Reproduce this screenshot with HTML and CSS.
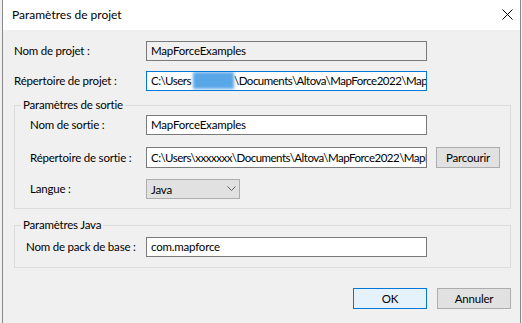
FILE: index.html
```html
<!DOCTYPE html>
<html lang="fr">
<head>
<meta charset="utf-8">
<title>Paramètres de projet</title>
<link rel="stylesheet" href="styles.css">
</head>
<body>
<div class="window">
  <div class="titlebar">
    <span class="title">Paramètres de projet</span>
    <svg class="close" width="11" height="11" viewBox="0 0 11 11"><path d="M0.5 0.5L10.5 10.5M10.5 0.5L0.5 10.5" stroke="#000" stroke-width="1" fill="none"/></svg>
  </div>
  <div class="content">
    <div class="row">
      <span class="label label-top">Nom de projet :</span>
      <div class="field readonly">MapForceExamples</div>
    </div>
    <div class="row row-gap">
      <span class="label label-top">Répertoire de projet :</span>
      <div class="field focused path">C:\Users<span class="redact"></span>\Documents\Altova\MapForce2022\MapForceExamples</div>
    </div>

    <div class="group group-out">
      <div class="legend">Paramètres de sortie</div>
      <div class="row">
        <span class="label label-g1">Nom de sortie :</span>
        <div class="field">MapForceExamples</div>
      </div>
      <div class="row row-dir">
        <span class="label label-g1">Répertoire de sortie :</span>
        <div class="field field-tall path">C:\Users\xxxxxxx\Documents\Altova\MapForce2022\MapForceExamples</div>
        <div class="button btn-browse">Parcourir</div>
      </div>
      <div class="row row-lang">
        <span class="label label-g1">Langue :</span>
        <div class="combo">
          <span>Java</span>
          <svg class="chevron" width="9" height="5" viewBox="0 0 9 5"><path d="M0.5 0.5L4.5 4.5L8.5 0.5" stroke="#606060" stroke-width="1" fill="none"/></svg>
        </div>
      </div>
    </div>

    <div class="group group-java">
      <div class="legend">Paramètres Java</div>
      <div class="row">
        <span class="label label-g2">Nom de pack de base :</span>
        <div class="field">com.mapforce</div>
      </div>
    </div>

    <div class="buttons">
      <div class="button btn-default">OK</div>
      <div class="button">Annuler</div>
    </div>
  </div>
</div>
</body>
</html>
```

FILE: styles.css
```css
* {
  box-sizing: border-box;
}

html, body {
  margin: 0;
  padding: 0;
}

body {
  width: 522px;
  height: 323px;
  overflow: hidden;
  background: #f0f0f0;
  font-family: Lato, "Noto Sans", sans-serif;
  font-size: 11.5px;
  letter-spacing: -0.2px;
  color: #000;
}

.window {
  margin-left: 2px;
  width: 519px;
  height: 323px;
  border-left: 1px solid #8a8a8a;
  border-right: 1px solid #8a8a8a;
  background: #f0f0f0;
}

.titlebar {
  height: 30px;
  background: #fff;
  display: flex;
  align-items: center;
  justify-content: space-between;
  padding: 0 7px 0 9px;
}

.title {
  font-size: 12px;
  letter-spacing: 0;
  line-height: 16px;
  padding-bottom: 1px;
}

.close {
  display: block;
  margin-bottom: 1px;
}

.content {
  padding: 11px 0 0 11px;
}

.row {
  display: flex;
  align-items: center;
  height: 20px;
}

.row-gap {
  margin-top: 10px;
}

.label {
  flex: none;
  line-height: 14px;
  white-space: nowrap;
}

.label-top {
  width: 132px;
}

.label-g1 {
  width: 116px;
}

.label-g2 {
  width: 120px;
}

.field {
  flex: none;
  width: 281px;
  height: 20px;
  border: 1px solid #7a7a7a;
  background: #fff;
  padding: 0 4px;
  line-height: 18px;
  white-space: nowrap;
  overflow: hidden;
}

.field.path {
  letter-spacing: -0.5px;
}

.field.readonly {
  background: #f0f0f0;
}

.field.focused {
  border-color: #0078d7;
}

.redact {
  display: inline-block;
  width: 41px;
  height: 17px;
  vertical-align: top;
  background: #5aa7e8;
  filter: blur(1.5px);
  margin-left: 2px;
}

.group {
  position: relative;
  width: 497px;
  border: 1px solid #dcdcdc;
}

.group-out {
  margin-top: 14px;
  padding: 9px 0 9px 15px;
}

.group-java {
  margin-top: 16px;
  padding: 11px 0 10px 11px;
}

.legend {
  position: absolute;
  top: -8px;
  left: 6px;
  padding: 0 2px;
  line-height: 14px;
  background: #f0f0f0;
  white-space: nowrap;
}

.row-dir {
  margin-top: 12px;
  height: 21px;
}

.field-tall {
  height: 21px;
  line-height: 19px;
}

.row-lang {
  margin-top: 11px;
}

.combo {
  width: 94px;
  height: 20px;
  border: 1px solid #adadad;
  background: #e1e1e1;
  display: flex;
  align-items: center;
  justify-content: space-between;
  padding: 0 3px 0 4px;
}

.chevron {
  display: block;
  margin-bottom: 1px;
}

.button {
  width: 74px;
  height: 21px;
  border: 1px solid #adadad;
  background: #e1e1e1;
  display: flex;
  align-items: center;
  justify-content: center;
  line-height: 14px;
}

.btn-browse {
  margin-left: 9px;
  width: 64px;
}

.btn-default {
  border-color: #0078d7;
  background: #e5f1fb;
}

.buttons {
  width: 497px;
  margin-top: 20px;
  display: flex;
  justify-content: flex-end;
  gap: 10px;
}
```
